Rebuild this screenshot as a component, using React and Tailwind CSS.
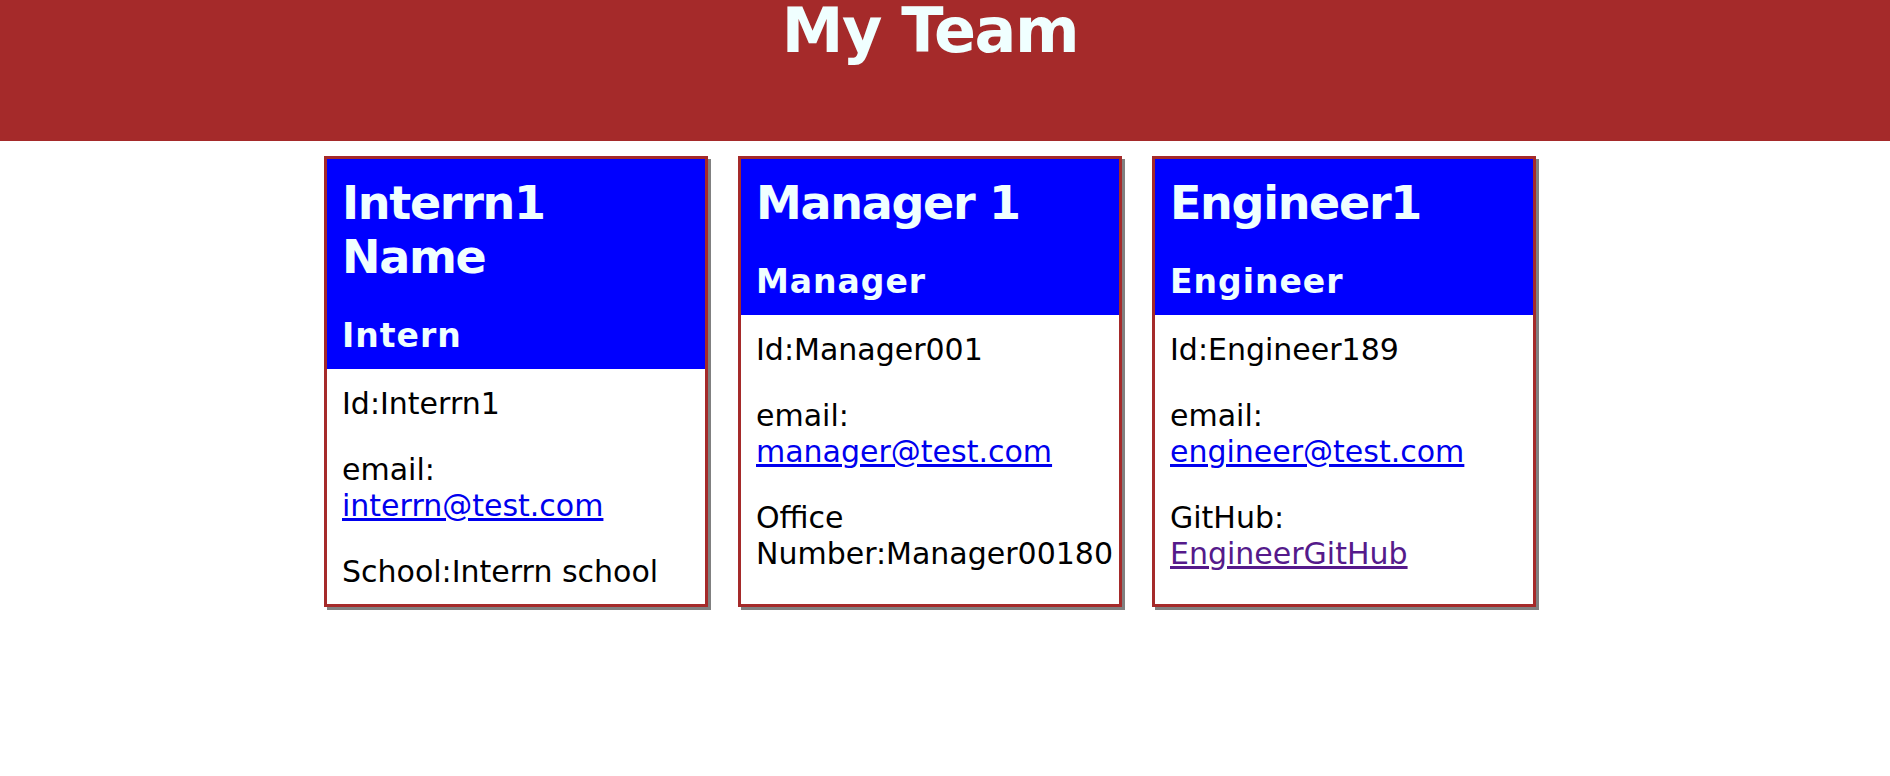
import React from "react";

const team = [
  {
    name: "Interrn1 Name",
    role: "Intern",
    id: "Interrn1",
    email: "interrn@test.com",
    extra: <p className="mt-[30px]">School:Interrn school</p>,
  },
  {
    name: "Manager 1",
    role: "Manager",
    id: "Manager001",
    email: "manager@test.com",
    extra: <p className="mt-[30px]">Office Number:Manager00180</p>,
  },
  {
    name: "Engineer1",
    role: "Engineer",
    id: "Engineer189",
    email: "engineer@test.com",
    extra: (
      <p className="mt-[30px]">
        GitHub:{" "}
        <a href="#" className="text-[#551a8b] underline">
          EngineerGitHub
        </a>
      </p>
    ),
  },
];

function Card({ name, role, id, email, extra }) {
  return (
    <div className="w-[384px] flex flex-col border-[3px] border-[#a52a2a] bg-white shadow-[3px_3px_0_#808080]">
      <div className="bg-[#0000ff] text-[#f0ffff] px-[15px] pt-[17px] pb-[14px]">
        <h1 className="text-[46px] leading-[54px] font-bold tracking-[-1.3px]">{name}</h1>
        <h2 className="mt-[32px] text-[33px] leading-[39px] font-bold tracking-[1px]">{role}</h2>
      </div>
      <div className="flex-1 px-[15px] pt-[17px] pb-[14px] text-[30px] leading-[36px] text-black">
        <p>Id:{id}</p>
        <p className="mt-[30px]">
          email:{" "}
          <a href="#" className="text-[#0000ee] underline">
            {email}
          </a>
        </p>
        {extra}
      </div>
    </div>
  );
}

export default function App() {
  return (
    <div className="min-h-[776px] bg-white font-['DejaVu_Sans',Verdana,sans-serif]">
      <header className="h-[141px] bg-[#a52a2a] pr-[30px]">
        <h1 className="text-center text-[62px] leading-none font-bold tracking-[-1.4px] text-[#f0ffff]">My Team</h1>
      </header>
      <main className="flex justify-center gap-[30px] pt-[15px] pr-[30px]">
        {team.map((m) => (
          <Card key={m.id} {...m} />
        ))}
      </main>
    </div>
  );
}
